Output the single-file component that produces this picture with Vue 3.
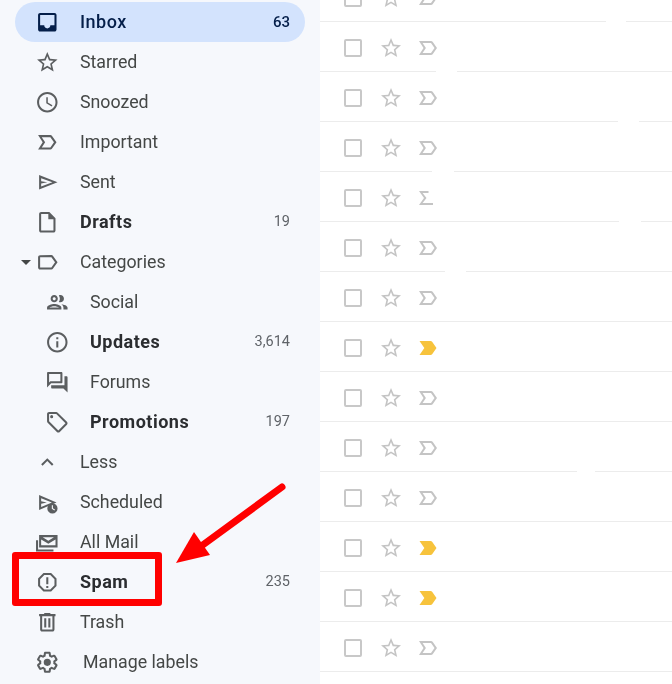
<script setup>
const P = {
  inbox: 'M19 3H5C3.9 3 3 3.9 3 5v14c0 1.1.9 2 2 2h14c1.1 0 2-.9 2-2V5c0-1.1-.9-2-2-2zM5 5h14v10h-4c0 1.66-1.35 3-3 3s-3-1.34-3-3H5z',
  star: 'M22 9.24l-7.19-.62L12 2 9.19 8.63 2 9.24l5.46 4.73L5.82 21 12 17.27 18.18 21l-1.63-7.03L22 9.24zM12 15.4l-3.76 2.27 1-4.28-3.32-2.88 4.38-.38L12 6.1l1.71 4.04 4.38.38-3.32 2.88 1 4.28L12 15.4z',
  clock: 'M11.99 2C6.47 2 2 6.48 2 12s4.47 10 9.99 10C17.52 22 22 17.52 22 12S17.52 2 11.99 2zM12 20c-4.42 0-8-3.58-8-8s3.58-8 8-8 8 3.58 8 8-3.58 8-8 8zm.5-13H11v6l5.25 3.15.75-1.23-4.5-2.67z',
  important: 'M15 19H3l4.5-7L3 5h12c.65 0 1.26.31 1.63.84L21 12l-4.37 6.16c-.37.53-.98.84-1.63.84zm-8.4-2H15l3.5-5L15 7H6.6l3.3 5-3.3 5z',
  sent: 'M4 5L22 12 4 19zM6 8v8l11-4zM6 10.9L12 12 6 13.1z',
  draft: 'M14 2H6c-1.1 0-1.99.9-1.99 2L4 20c0 1.1.89 2 1.99 2H18c1.1 0 2-.9 2-2V8l-6-6zm4 18H6V4h7v5h5v11z',
  label: 'M17.63 5.84C17.27 5.33 16.67 5 16 5L5 5.01C3.9 5.01 3 5.9 3 7v10c0 1.1.9 1.99 2 1.99L16 19c.67 0 1.27-.33 1.63-.84L22 12l-4.37-6.16zM16 17H5V7h11l3.55 5L16 17z',
  people: 'M9 13.75c-2.34 0-7 1.17-7 3.5V19h14v-1.75c0-2.33-4.66-3.5-7-3.5zM4.34 17c.84-.58 2.87-1.25 4.66-1.25s3.82.67 4.66 1.25H4.34zM9 12c1.93 0 3.5-1.57 3.5-3.5S10.93 5 9 5 5.5 6.57 5.5 8.5 7.07 12 9 12zm0-5c.83 0 1.5.67 1.5 1.5S9.83 10 9 10s-1.5-.67-1.5-1.5S8.17 7 9 7zm7.04 6.81c1.16.84 1.96 1.96 1.96 3.44V19h4v-1.75c0-2.02-3.5-3.17-5.96-3.44zM15 12c1.93 0 3.5-1.57 3.5-3.5S16.93 5 15 5c-.54 0-1.04.13-1.5.35.63.89 1 1.98 1 3.15s-.37 2.26-1 3.15c.46.22.96.35 1.5.35z',
  info: 'M11 7h2v2h-2zm0 4h2v6h-2zm1-9C6.48 2 2 6.48 2 12s4.48 10 10 10 10-4.48 10-10S17.52 2 12 2zm0 18c-4.41 0-8-3.59-8-8s3.59-8 8-8 8 3.59 8 8-3.59 8-8 8z',
  forum: 'M15 4v7H5.17L4 12.17V4h11m1-2H3c-.55 0-1 .45-1 1v14l4-4h10c.55 0 1-.45 1-1V3c0-.55-.45-1-1-1zm5 4h-2v9H6v2c0 .55.45 1 1 1h11l4 4V7c0-.55-.45-1-1-1z',
  tag: 'M21.41 11.58l-9-9C12.05 2.22 11.55 2 11 2H4c-1.1 0-2 .9-2 2v7c0 .55.22 1.05.59 1.42l9 9c.36.36.86.58 1.41.58s1.05-.22 1.41-.59l7-7c.37-.36.59-.86.59-1.41s-.23-1.06-.59-1.42zM13 20.01L4 11V4h7v-.01l9 9-7 7.02zM6.5 5A1.5 1.5 0 1 0 6.5 8 1.5 1.5 0 1 0 6.5 5z',
  less: 'M12 8l-6 6 1.41 1.41L12 10.83l4.59 4.58L18 14z',
  scheduled: 'M4 5L21 12.2 4 19.5zM6 8v8.5l10.5-4.3zM6 11L11.5 12.2 6 13.4z|M17 13a5 5 0 1 0 0 10 5 5 0 1 0 0-10zm-.6 2h1.1v2.8l2 1.2-.6.9-2.5-1.5z',
  allmail: 'M4 5h18v12H4zM6 9.2V15h14V9.2l-7 4.3zM7.5 7l5.5 3.4L18.5 7zM1 10h2v9h15v2H1z',
  spam: 'M15.73 3H8.27L3 8.27v7.46L8.27 21h7.46L21 15.73V8.27L15.73 3zM19 14.9L14.9 19H9.1L5 14.9V9.1L9.1 5h5.8L19 9.1v5.8zM11 7h2v7h-2zm0 8.5h2v2h-2z',
  trash: 'M15 4V3H9v1H4v2h1v13c0 1.1.9 2 2 2h10c1.1 0 2-.9 2-2V6h1V4h-5zm2 15H7V6h10v13zM9 8h2v9H9zm4 0h2v9h-2z',
  gear: 'M13.85 22.25h-3.7c-.74 0-1.36-.54-1.45-1.27l-.27-1.89c-.27-.14-.53-.29-.79-.46l-1.8.72c-.7.26-1.47-.03-1.81-.65L2.2 15.53c-.35-.66-.2-1.44.36-1.88l1.53-1.19c-.01-.15-.02-.3-.02-.46 0-.15.01-.31.02-.46l-1.52-1.19c-.59-.45-.74-1.26-.37-1.88l1.85-3.19c.34-.62 1.11-.9 1.79-.63l1.81.73c.26-.17.52-.32.78-.46l.27-1.91c.09-.7.71-1.25 1.44-1.25h3.7c.74 0 1.36.54 1.45 1.27l.27 1.89c.27.14.53.29.79.46l1.8-.72c.71-.26 1.48.03 1.82.65l1.84 3.18c.36.66.2 1.44-.36 1.88l-1.52 1.19c.01.15.02.3.02.46s-.01.31-.02.46l1.52 1.19c.56.45.72 1.23.37 1.86l-1.86 3.22c-.34.62-1.11.9-1.8.63l-1.8-.72c-.26.17-.52.32-.78.46l-.27 1.91c-.1.68-.72 1.22-1.46 1.22zm-3.23-2h2.76l.37-2.55.53-.22c.44-.18.88-.44 1.34-.78l.45-.34 2.38.96 1.38-2.4-2.03-1.58.07-.56c.03-.26.06-.51.06-.78s-.03-.53-.06-.78l-.07-.56 2.03-1.58-1.39-2.4-2.39.96-.45-.35c-.42-.32-.87-.58-1.33-.77l-.52-.22-.37-2.55h-2.76l-.37 2.55-.53.21c-.44.19-.88.44-1.34.79l-.45.33-2.38-.95-1.39 2.39 2.03 1.58-.07.56a7 7 0 0 0-.06.79c0 .26.02.53.06.78l.07.56-2.03 1.58 1.38 2.4 2.39-.96.45.35c.43.33.86.58 1.33.77l.53.22.38 2.55zM12 8.5a3.5 3.5 0 1 0 0 7 3.5 3.5 0 1 0 0-7z',
  yellow: 'M3.5 18.99l11 .01c.67 0 1.27-.33 1.63-.84L20.5 12l-4.37-6.16c-.36-.51-.96-.84-1.63-.84l-11 .01L8.34 12 3.5 18.99z',
  sigma: 'M3 5h9.5v2H6.6l3.9 5-3.9 5H17v2H3l5-7z'
}

const nav = [
  { name: 'Inbox', icon: 'inbox', count: '63', kind: 'active' },
  { name: 'Starred', icon: 'star' },
  { name: 'Snoozed', icon: 'clock' },
  { name: 'Important', icon: 'important' },
  { name: 'Sent', icon: 'sent' },
  { name: 'Drafts', icon: 'draft', count: '19', bold: true },
  { name: 'Categories', icon: 'label', kind: 'cat' },
  { name: 'Social', icon: 'people', kind: 'sub' },
  { name: 'Updates', icon: 'info', count: '3,614', bold: true, kind: 'sub' },
  { name: 'Forums', icon: 'forum', kind: 'sub' },
  { name: 'Promotions', icon: 'tag', count: '197', bold: true, kind: 'sub' },
  { name: 'Less', icon: 'less' },
  { name: 'Scheduled', icon: 'scheduled' },
  { name: 'All Mail', icon: 'allmail' },
  { name: 'Spam', icon: 'spam', count: '235', bold: true },
  { name: 'Trash', icon: 'trash' },
  { name: 'Manage labels', icon: 'gear', kind: 'manage' }
]

const rows = [
  { mark: 'important', gap: [606, 20] },
  { mark: 'important', gap: [436, 21] },
  { mark: 'important', gap: [618, 21] },
  { mark: 'important', gap: [432, 22] },
  { mark: 'sigma', gap: [619, 22] },
  { mark: 'important', gap: [445, 21] },
  { mark: 'important' },
  { mark: 'yellow' },
  { mark: 'important' },
  { mark: 'important', gap: [577, 18] },
  { mark: 'important' },
  { mark: 'yellow' },
  { mark: 'yellow' },
  { mark: 'important' },
  { mark: 'important' }
]
</script>

<template>
  <div class="page">
    <nav class="side">
      <div
        v-for="n in nav"
        :key="n.name"
        class="item"
        :class="[n.kind, { bold: n.bold }]"
      >
        <span v-if="n.kind === 'cat'" class="caret"></span>
        <svg class="ico" viewBox="0 0 24 24">
          <path v-for="d in P[n.icon].split('|')" :key="d" :d="d" fill-rule="evenodd" />
        </svg>
        <span class="name">{{ n.name }}</span>
        <span v-if="n.count" class="count">{{ n.count }}</span>
      </div>
    </nav>

    <main class="list">
      <div v-for="(r, i) in rows" :key="i" class="row">
        <div class="cells">
          <span class="check"></span>
          <svg class="mark star" viewBox="0 0 24 24"><path :d="P.star" /></svg>
          <svg class="mark" :class="{ yellow: r.mark === 'yellow' }" viewBox="0 0 24 24"><path :d="P[r.mark]" /></svg>
        </div>
        <div class="rule">
          <template v-if="r.gap">
            <i class="seg" :style="{ width: r.gap[0] - 320 + 'px' }"></i>
            <i class="hole" :style="{ width: r.gap[1] + 'px' }"></i>
          </template>
          <i class="seg grow"></i>
        </div>
      </div>
    </main>

    <div class="box"></div>
    <svg class="arrow" viewBox="0 0 672 684">
      <line x1="282" y1="487" x2="200" y2="547" stroke="#ff0000" stroke-width="7" stroke-linecap="round" />
      <polygon points="176,563 194,532 210,555" fill="#ff0000" />
    </svg>
  </div>
</template>

<style scoped>
.page {
  position: relative;
  display: flex;
  width: 672px;
  height: 684px;
  overflow: hidden;
  background: #fff;
  font-family: Roboto, "Liberation Sans", sans-serif;
  filter: blur(0.35px);
}
.side {
  flex: 0 0 320px;
  display: flex;
  flex-direction: column;
  box-sizing: border-box;
  padding: 2px 15px 0;
  background: #f6f8fc;
}
.item {
  display: flex;
  align-items: center;
  flex: 0 0 40px;
  padding: 0 15px 0 20px;
  border-radius: 20px;
  color: #444746;
  font-size: 17.8px;
}
.ico {
  flex: 0 0 24.6px;
  width: 24.6px;
  height: 24.6px;
  fill: #5b5e60;
}
.name {
  margin-left: 20.4px;
  padding-bottom: 2px;
}
.count {
  margin-left: auto;
  padding-bottom: 1px;
  font-size: 14.5px;
  font-weight: 400;
  color: #5f6368;
}
.bold .name {
  font-weight: 700;
  font-size: 18px;
  letter-spacing: 0.5px;
  color: #2b2d30;
}
.active {
  background: #d3e3fd;
  color: #041e49;
}
.active .name {
  font-size: 18px;
  font-weight: 500;
  letter-spacing: 0.5px;
}
.active .ico {
  fill: #041e49;
}
.active .count {
  font-size: 15px;
  font-weight: 500;
  color: #041e49;
}
.sub {
  padding-left: 30px;
}
.cat {
  padding-left: 6px;
}
.manage .name {
  margin-left: 23.4px;
}
.caret {
  flex: 0 0 10px;
  box-sizing: border-box;
  height: 5px;
  margin-right: 4px;
  border-top: 5px solid #444746;
  border-left: 5px solid transparent;
  border-right: 5px solid transparent;
}
.list {
  flex: 1;
  margin-top: -28px;
}
.row {
  height: 50px;
  display: flex;
  flex-direction: column;
}
.cells {
  flex: 1;
  display: flex;
  align-items: center;
  padding-left: 21px;
  padding-top: 3px;
}
.check {
  flex: 0 0 24px;
  height: 24px;
  position: relative;
}
.check::before {
  content: "";
  position: absolute;
  left: 3px;
  top: 3px;
  width: 14px;
  height: 14px;
  border: 2px solid #c8c8c8;
  border-radius: 2px;
}
.mark {
  flex: 0 0 24px;
  width: 24px;
  height: 24px;
  margin-left: 13px;
  fill: #c4c4c4;
}
.mark.star {
  margin-left: 14px;
}
.mark.yellow {
  fill: #f7c33c;
}
.rule {
  flex: 0 0 1px;
  display: flex;
}
.seg {
  display: block;
  background: #ececec;
}
.grow {
  flex: 1;
}
.hole {
  display: block;
}
.box {
  position: absolute;
  left: 12px;
  top: 552px;
  width: 136px;
  height: 40px;
  border: 7px solid #ff0000;
  border-radius: 3px;
}
.arrow {
  position: absolute;
  left: 0;
  top: 0;
  width: 672px;
  height: 684px;
  pointer-events: none;
}
</style>

<style>
html,
body {
  margin: 0;
  overflow: hidden;
}
</style>
